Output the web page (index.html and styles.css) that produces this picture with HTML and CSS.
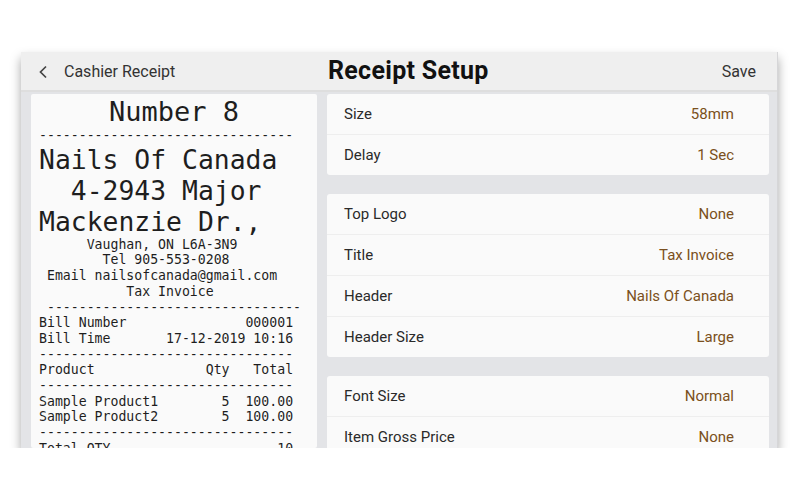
FILE: index.html
```html
<!DOCTYPE html>
<html lang="en">
  <head>
    <meta charset="UTF-8" />
    <meta name="viewport" content="width=device-width, initial-scale=1.0" />
    <title>Receipt Setup</title>
    <link rel="stylesheet" href="styles.css">
  </head>
  <body>
    <div class="device">
      <div class="topbar">
        <div class="back">
          <svg width="10" height="14" viewBox="0 0 10 14"><polyline points="8,1.5 2.5,7 8,12.5" fill="none" stroke="#444" stroke-width="1.7" /></svg>
          <span>Cashier Receipt</span>
        </div>
        <h1>Receipt Setup</h1>
        <div class="save">Save</div>
      </div>

      <div class="content">
        <div class="receipt">
          <div class="r-number">Number 8</div>
          <div class="r-small">--------------------------------</div>
          <div class="r-big">Nails Of Canada
  4-2943 Major
Mackenzie Dr.,</div>
          <div class="r-small">      Vaughan, ON L6A-3N9
        Tel 905-553-0208
 Email nailsofcanada@gmail.com
           Tax Invoice
 --------------------------------
Bill Number               000001
Bill Time       17-12-2019 10:16
--------------------------------
Product              Qty   Total
--------------------------------
Sample Product1        5  100.00
Sample Product2        5  100.00
--------------------------------
Total QTY                     10</div>
        </div>

        <div class="settings">
          <div class="card">
            <div class="row"><span>Size</span><span class="value">58mm</span></div>
            <div class="row"><span>Delay</span><span class="value">1 Sec</span></div>
          </div>
          <div class="card">
            <div class="row"><span>Top Logo</span><span class="value">None</span></div>
            <div class="row"><span>Title</span><span class="value">Tax Invoice</span></div>
            <div class="row"><span>Header</span><span class="value">Nails Of Canada</span></div>
            <div class="row"><span>Header Size</span><span class="value">Large</span></div>
          </div>
          <div class="card">
            <div class="row"><span>Font Size</span><span class="value">Normal</span></div>
            <div class="row"><span>Item Gross Price</span><span class="value">None</span></div>
          </div>
        </div>
      </div>
    </div>
  </body>
</html>
```

FILE: styles.css
```css
body {
  margin: 0;
  padding: 52px 22px 0 21px;
  background-color: #fff;
  font-family: Roboto, "Liberation Sans", sans-serif;
  color: #333;
}
.device {
  height: 396px;
  background-color: #e3e4e7;
  border-right: 1px solid #d6d6d8;
  box-shadow: 0px 6px 10px rgba(0, 0, 0, 0.35);
  display: flex;
  flex-direction: column;
  overflow: hidden;
}
.topbar {
  height: 38px;
  background-color: #efefef;
  border-bottom: 2px solid #dedede;
  display: flex;
  align-items: center;
  justify-content: space-between;
  padding: 0 21px 0 17px;
  position: relative;
}
.back {
  display: flex;
  align-items: center;
  gap: 16px;
  font-size: 16px;
  color: #333;
}
.back svg {
  margin-top: 1px;
}
.topbar h1 {
  position: absolute;
  left: 307px;
  top: 0;
  margin: 0;
  line-height: 38px;
  font-size: 25px;
  letter-spacing: 0.3px;
  font-weight: bold;
  color: #111;
}
.save {
  font-size: 16px;
  color: #333;
}
.content {
  flex: 1;
  display: flex;
  gap: 10px;
  padding: 2px 8px 0 10px;
  min-height: 0;
}
.receipt {
  width: 286px;
  flex-shrink: 0;
  background-color: #fafafa;
  border-radius: 2px;
  padding: 2px 0 0 8px;
  box-sizing: border-box;
  font-family: "DejaVu Sans Mono", "Liberation Mono", monospace;
  color: #1e1e1e;
  overflow: hidden;
}
.r-number,
.r-big,
.r-small {
  white-space: pre;
}
.r-number {
  font-size: 27px;
  line-height: 32px;
  text-align: center;
  padding-right: 8px;
}
.r-big {
  font-size: 26.4px;
  line-height: 31px;
}
.r-small {
  font-size: 13.2px;
  line-height: 15.7px;
}
.settings {
  flex: 1;
  display: flex;
  flex-direction: column;
  gap: 19px;
}
.card {
  background-color: #fafafa;
  border-radius: 3px;
}
.row {
  height: 40px;
  display: flex;
  align-items: center;
  justify-content: space-between;
  padding: 0 35px 0 17px;
  font-size: 15px;
  color: #2a2a2a;
  border-top: 1px solid #eeeeee;
}
.row:first-child {
  border-top: none;
}
.value {
  color: #7a5020;
}
```
